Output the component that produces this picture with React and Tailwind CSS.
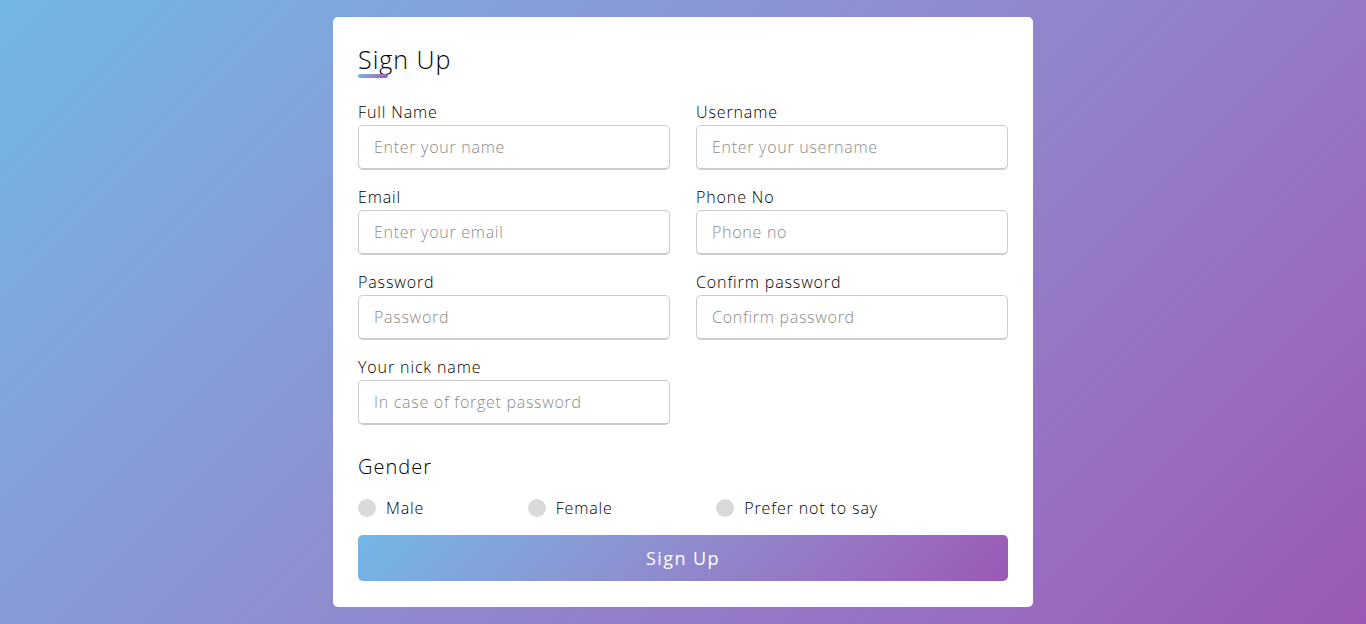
const fields = [
  { label: "Full Name", placeholder: "Enter your name" },
  { label: "Username", placeholder: "Enter your username" },
  { label: "Email", placeholder: "Enter your email" },
  { label: "Phone No", placeholder: "Phone no" },
  { label: "Password", placeholder: "Password" },
  { label: "Confirm password", placeholder: "Confirm password" },
  { label: "Your nick name", placeholder: "In case of forget password" },
];

const genders = ["Male", "Female", "Prefer not to say"];

function Field({ label, placeholder }) {
  return (
    <div className="flex flex-col">
      <label className="text-[16px] leading-[24px] text-black mb-[1px] tracking-[0.055em]">{label}</label>
      <input
        type="text"
        placeholder={placeholder}
        className="h-[45px] w-full rounded-[5px] border border-[#ccc] border-b-2 pl-[15px] text-[16px] font-light tracking-[0.045em] outline-none placeholder:text-[#8a8a8a]"
      />
    </div>
  );
}

export default function App() {
  return (
    <div
      className="min-h-screen flex items-start justify-center pt-[17px] bg-linear-135 from-[#71b7e6] to-[#9b59b6] font-light"
      style={{ fontFamily: '"Open Sans", "Noto Sans", sans-serif' }}
    >
      <div className="w-[700px] bg-white rounded-[5px] px-[25px] pt-[25px] pb-[26px]">
        <div className="relative inline-block text-[25px] leading-[34px] text-black pb-[4px] tracking-[0.04em]">
          Sign Up
          <span className="absolute left-0 bottom-[2px] h-[4px] w-[30px] rounded-[5px] bg-linear-135 from-[#71b7e6] to-[#9b59b6]" />
        </div>

        <div className="grid grid-cols-2 gap-x-[26px] gap-y-[15px] mt-[20px]">
          {fields.map((f) => (
            <Field key={f.label} {...f} />
          ))}
        </div>

        <div className="mt-[28px]">
          <div className="text-[20px] leading-[28px] text-black tracking-[0.05em]">Gender</div>
          <div className="flex justify-between w-[80%] mt-[15px]">
            {genders.map((g) => (
              <label key={g} className="flex items-center">
                <span className="h-[18px] w-[18px] rounded-full bg-[#d9d9d9] mr-[10px]" />
                <span className="text-[16px] leading-[24px] text-black tracking-[0.055em]">{g}</span>
              </label>
            ))}
          </div>
        </div>

        <button className="mt-[15px] h-[46px] w-full rounded-[5px] bg-linear-135 from-[#71b7e6] to-[#9b59b6] text-white text-[18px] font-normal tracking-[1.4px]">
          Sign Up
        </button>
      </div>
    </div>
  );
}
